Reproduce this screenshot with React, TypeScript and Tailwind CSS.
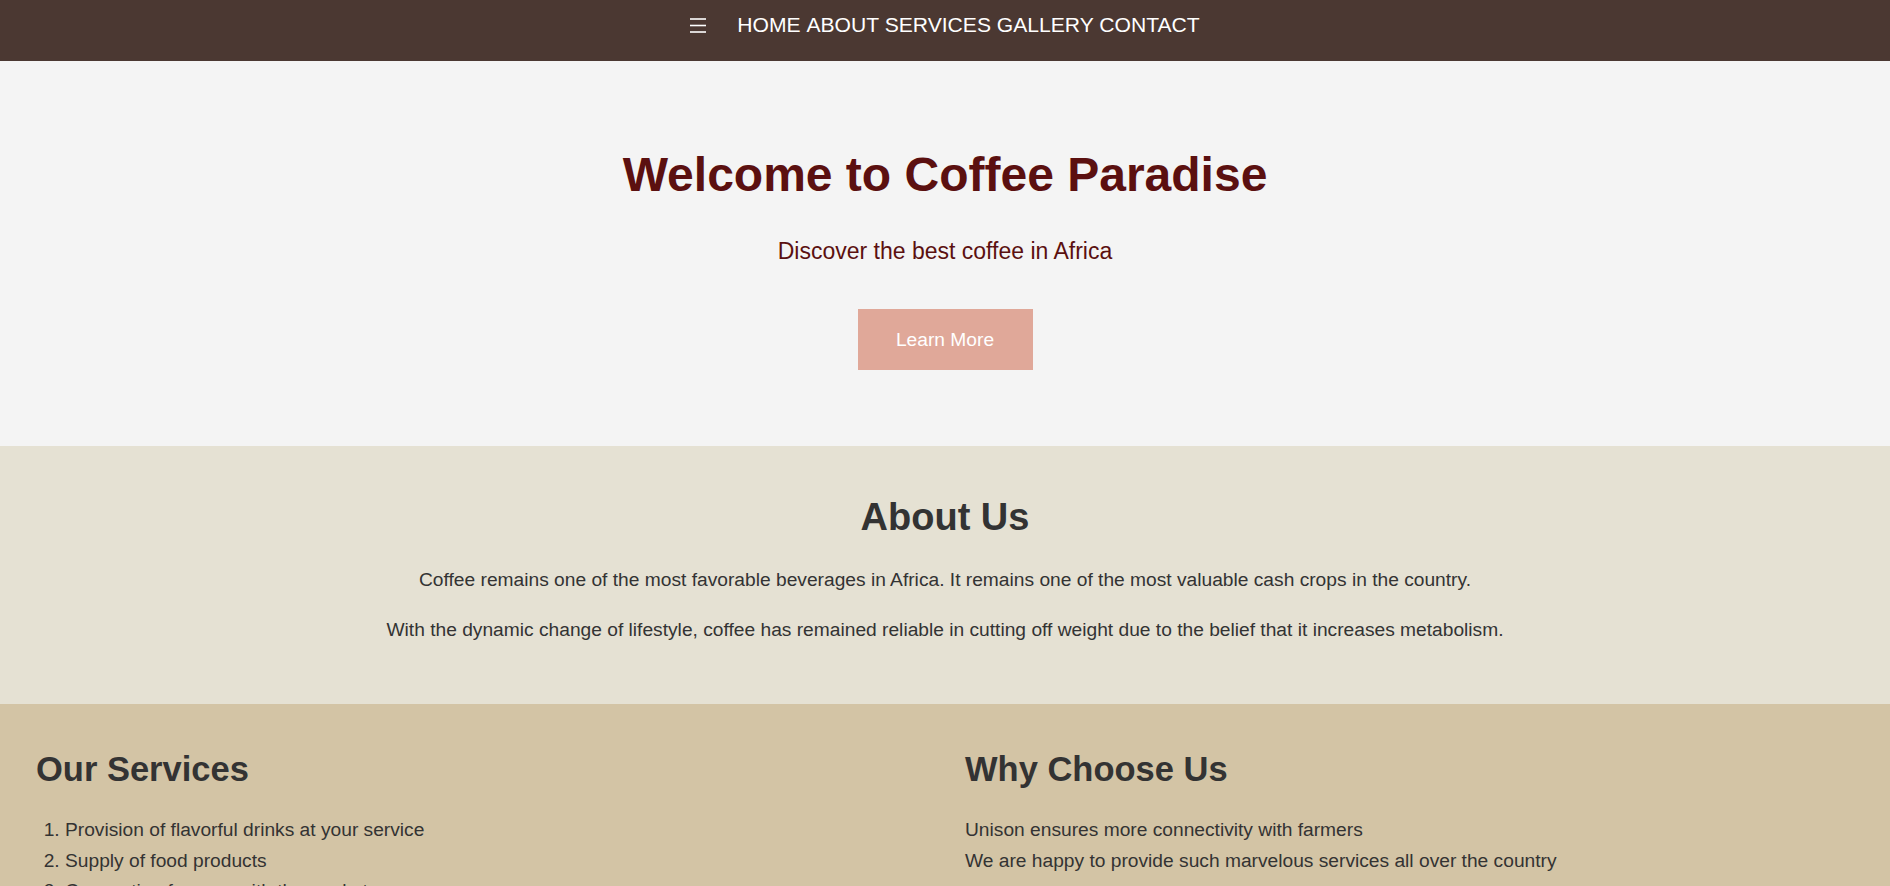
const navItems = ['HOME', 'ABOUT', 'SERVICES', 'GALLERY', 'CONTACT'];

const services = [
    'Provision of flavorful drinks at your service',
    'Supply of food products',
    'Connecting farmers with the market',
];

const reasons = [
    'Unison ensures more connectivity with farmers',
    'We are happy to provide such marvelous services all over the country',
];

const App = () => {
    return (
        <div className="min-h-screen bg-[#f4f4f4] font-['Liberation_Sans',Arial,sans-serif] text-[#333]">
            {/* Header */}
            <header className="h-[61px] bg-[#4b3832] pt-[13px]">
                <nav className="flex items-center justify-center gap-[31px] text-white">
                    <button aria-label="Menu" className="flex h-[24px] w-[16px] items-center">
                        <svg width="16" height="15" viewBox="0 0 16 15" fill="none">
                            <line x1="0" y1="1" x2="16" y2="1" stroke="white" strokeWidth="1.6" />
                            <line x1="0" y1="7.5" x2="16" y2="7.5" stroke="white" strokeWidth="1.6" />
                            <line x1="0" y1="14" x2="16" y2="14" stroke="white" strokeWidth="1.6" />
                        </svg>
                    </button>
                    <ul className="flex text-[21.1px] leading-[24px] whitespace-pre">
                        {navItems.map((item, i) => (
                            <li key={item}>
                                <a href={`#${item.toLowerCase()}`}>{item}</a>
                                {i < navItems.length - 1 ? ' ' : ''}
                            </li>
                        ))}
                    </ul>
                </nav>
            </header>

            {/* Hero */}
            <section className="flex flex-col items-center bg-[#f4f4f4] pt-[86px] pb-[76px] text-center">
                <h1 className="text-[48px] leading-[56px] font-bold text-[#5b1010]">Welcome to Coffee Paradise</h1>
                <p className="mt-[34px] text-[23px] leading-[28px] text-[#5b1010]">Discover the best coffee in Africa</p>
                <a
                    href="#about"
                    className="mt-[44px] flex h-[61px] w-[175px] items-center justify-center bg-[#e0a899] text-[19.2px] leading-[22px] text-white"
                >
                    Learn More
                </a>
            </section>

            {/* About */}
            <section id="about" className="bg-[#e5e1d3] pt-[49px] pb-[59px] text-center">
                <h2 className="text-[38px] leading-[44px] font-bold">About Us</h2>
                <p className="mt-[25px] text-[19.2px] leading-[31px]">
                    Coffee remains one of the most favorable beverages in Africa. It remains one of the most valuable cash crops in the country.
                </p>
                <p className="mt-[19px] text-[19.2px] leading-[31px]">
                    With the dynamic change of lifestyle, coffee has remained reliable in cutting off weight due to the belief that it increases metabolism.
                </p>
            </section>

            {/* Services + Why */}
            <section id="services" className="grid grid-cols-2 bg-[#d3c4a5] px-4 pt-[45px] pb-[60px]">
                <div className="px-5">
                    <h2 className="text-[34.5px] leading-[40px] font-bold">Our Services</h2>
                    <ol className="mt-[26px] list-decimal pl-[29px] text-[19.2px] leading-[30.5px]">
                        {services.map((s) => (
                            <li key={s}>{s}</li>
                        ))}
                    </ol>
                </div>
                <div className="px-5">
                    <h2 className="text-[34.5px] leading-[40px] font-bold">Why Choose Us</h2>
                    <ul className="mt-[26px] text-[19.2px] leading-[30.5px]">
                        {reasons.map((r) => (
                            <li key={r}>{r}</li>
                        ))}
                    </ul>
                </div>
            </section>
        </div>
    );
};

export default App;
